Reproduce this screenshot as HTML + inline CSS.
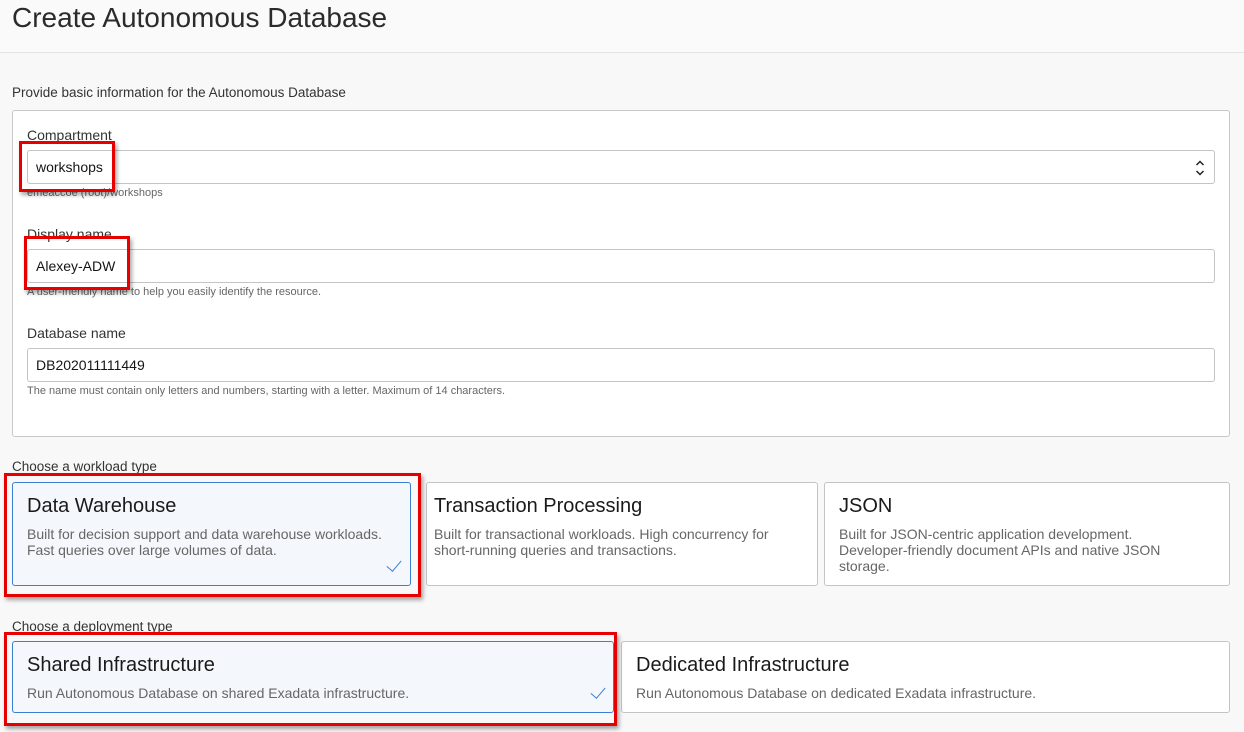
<!DOCTYPE html>
<html><head><style>
body{margin:0;width:1244px;height:732px;background:#f8f8f8;font-family:"Liberation Sans",sans-serif;color:#161513;position:relative;overflow:hidden}
.a{position:absolute;white-space:nowrap}
.hdr{position:absolute;left:0;top:0;width:1244px;height:52px;background:#fafafa;border-bottom:1px solid #e4e4e4}
.panel{position:absolute;left:12px;top:110px;width:1216px;height:325px;background:#fff;border:1px solid #c8c8c8;border-radius:3px}
.inp{position:absolute;left:27px;width:1188px;height:34px;background:#fff;border:1px solid #c4c4c4;border-radius:3px;box-sizing:border-box;font-size:14px;padding:0 0 0 8px;line-height:33px}
.lbl{font-size:14px;color:#333}
.help{font-size:11px;color:#666}
.card{position:absolute;background:#fff;border:1px solid #c4c4c4;border-radius:3px;box-sizing:border-box;padding:12px 14px}
.card.sel{background:#f4f7fb;border-color:#3a7fd1}
.card h3{margin:0;font-weight:normal;font-size:20px;color:#1a1a1a;line-height:22px}
.card p{margin:9px 0 0;font-size:14px;color:#666;line-height:16px}
.red{position:absolute;border:3px solid #e60000;box-shadow:2px 3px 4px rgba(0,0,0,.35);box-sizing:border-box}
.chk{position:absolute;width:7px;height:13px;border-right:1.3px solid #3a7fd1;border-bottom:1.3px solid #3a7fd1;transform:rotate(40deg)}
</style></head><body>
<div class="hdr"></div>
<div class="a" style="left:12px;top:2px;font-size:28px;color:#2b2b2b">Create Autonomous Database</div>
<div class="a lbl" style="left:12px;top:85px;font-size:13.5px">Provide basic information for the Autonomous Database</div>
<div class="panel"></div>
<div class="a lbl" style="left:27px;top:127px">Compartment</div>
<div class="inp" style="top:150px">workshops</div>
<svg class="a" style="left:1195px;top:159px" width="10" height="18" viewBox="0 0 10 18"><path d="M1.5 6 5 2.5 8.5 6M1.5 12 5 15.5 8.5 12" fill="none" stroke="#222" stroke-width="1.5"/></svg>
<div class="a help" style="left:27px;top:187px">emeaccoe (root)/workshops</div>
<div class="a lbl" style="left:27px;top:226px">Display name</div>
<div class="inp" style="top:249px">Alexey-ADW</div>
<div class="a help" style="left:27px;top:286px">A user-friendly name to help you easily identify the resource.</div>
<div class="a lbl" style="left:27px;top:325px">Database name</div>
<div class="inp" style="top:348px">DB202011111449</div>
<div class="a help" style="left:27px;top:385px">The name must contain only letters and numbers, starting with a letter. Maximum of 14 characters.</div>
<div class="red" style="left:19px;top:141px;width:96px;height:51px"></div>
<div class="red" style="left:24px;top:236px;width:106px;height:54px"></div>

<div class="a lbl" style="left:12px;top:459px;font-size:13.5px">Choose a workload type</div>
<div class="card sel" style="left:12px;top:482px;width:399px;height:104px"><h3>Data Warehouse</h3><p>Built for decision support and data warehouse workloads.<br>Fast queries over large volumes of data.</p></div>
<div class="chk" style="left:390px;top:557px"></div>
<div class="card" style="left:426px;top:482px;width:392px;height:104px;padding-left:7px"><h3>Transaction Processing</h3><p>Built for transactional workloads. High concurrency for<br>short-running queries and transactions.</p></div>
<div class="card" style="left:824px;top:482px;width:406px;height:104px"><h3>JSON</h3><p>Built for JSON-centric application development.<br>Developer-friendly document APIs and native JSON<br>storage.</p></div>
<div class="red" style="left:4px;top:473px;width:417px;height:124px"></div>

<div class="a lbl" style="left:12px;top:619px;font-size:13.5px">Choose a deployment type</div>
<div class="card sel" style="left:12px;top:641px;width:602px;height:72px"><h3>Shared Infrastructure</h3><p>Run Autonomous Database on shared Exadata infrastructure.</p></div>
<div class="chk" style="left:594px;top:684px"></div>
<div class="card" style="left:621px;top:641px;width:609px;height:72px"><h3>Dedicated Infrastructure</h3><p>Run Autonomous Database on dedicated Exadata infrastructure.</p></div>
<div class="red" style="left:4px;top:632px;width:613px;height:94px"></div>
</body></html>
